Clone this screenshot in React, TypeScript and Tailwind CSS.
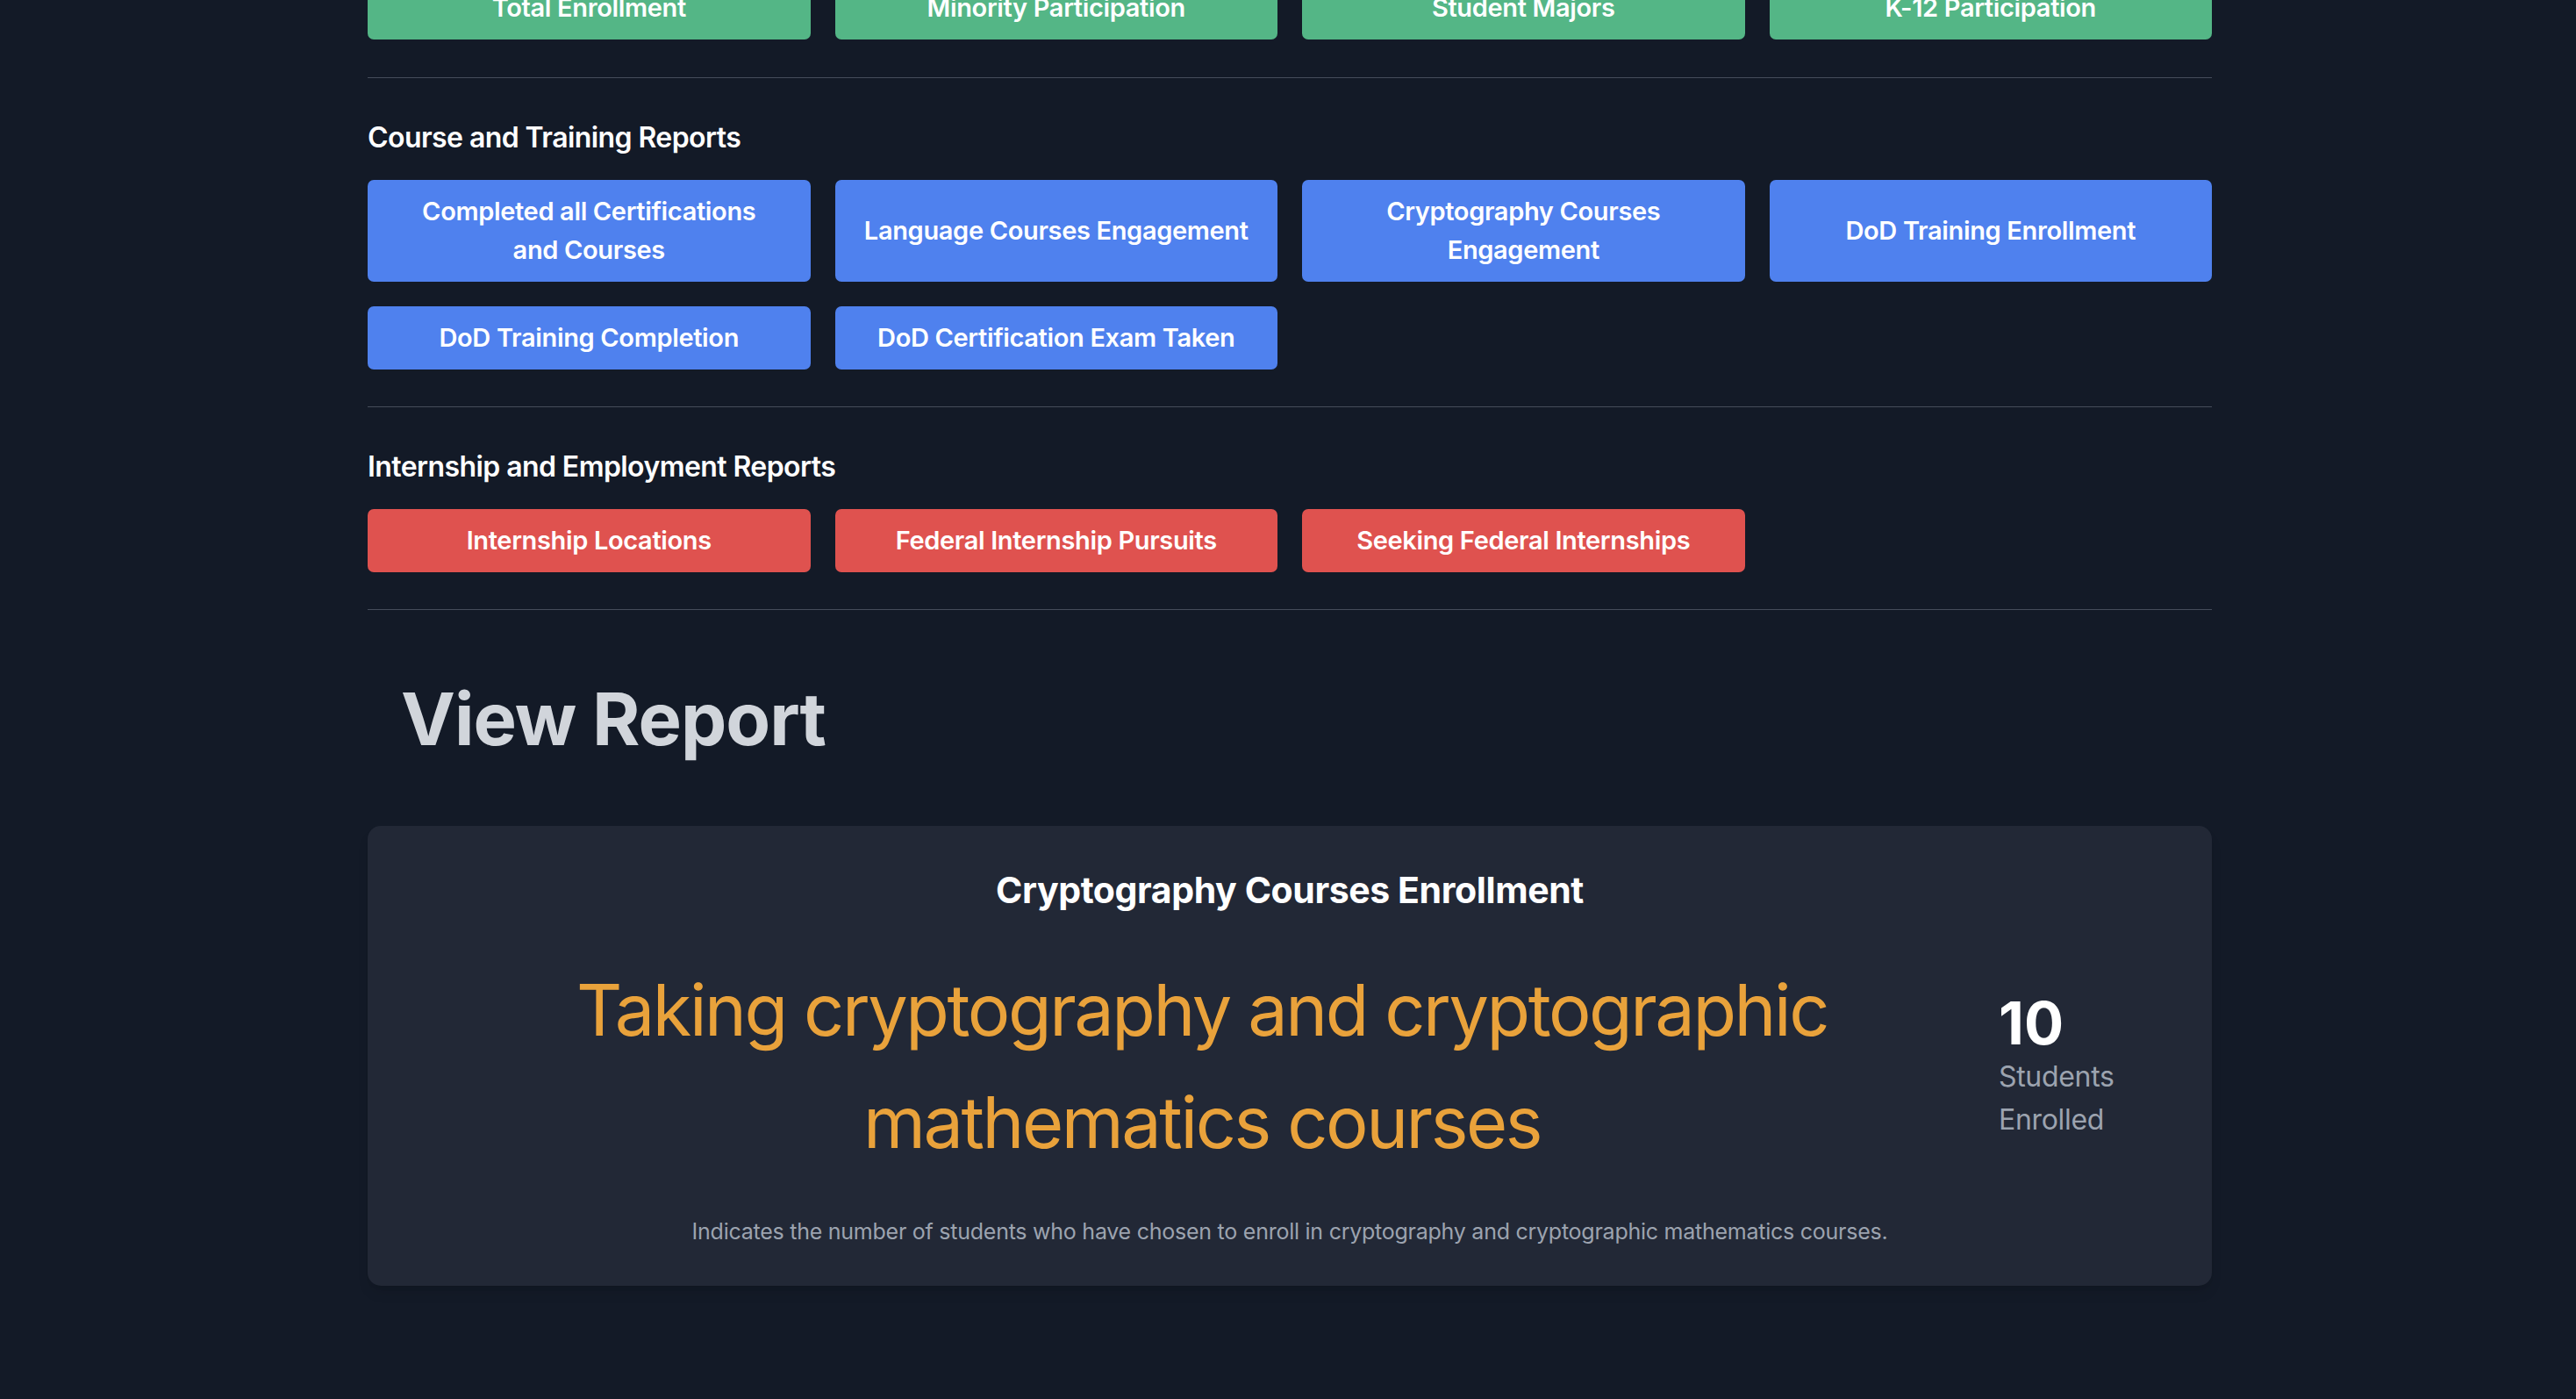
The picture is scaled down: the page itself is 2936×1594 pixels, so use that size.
import React from 'react';

type Section = {
  title?: string;
  color: string;
  items: React.ReactNode[];
};

const sections: Section[] = [
  {
    color: 'bg-[#54b686]',
    items: ['Total Enrollment', 'Minority Participation', 'Student Majors', 'K-12 Participation'],
  },
  {
    title: 'Course and Training Reports',
    color: 'bg-[#4f81ee]',
    items: [
      <>Completed all Certifications<br />and Courses</>,
      'Language Courses Engagement',
      <>Cryptography Courses<br />Engagement</>,
      'DoD Training Enrollment',
      'DoD Training Completion',
      'DoD Certification Exam Taken',
    ],
  },
  {
    title: 'Internship and Employment Reports',
    color: 'bg-[#df524f]',
    items: ['Internship Locations', 'Federal Internship Pursuits', 'Seeking Federal Internships'],
  },
];

function ReportButton({ label, color }: { label: React.ReactNode; color: string }) {
  return (
    <button
      className={`${color} flex items-center justify-center rounded-[7px] px-[30px] py-[14px] text-center text-[29px] font-semibold leading-[44px] tracking-[-0.012em] text-white whitespace-nowrap`}
    >
      <span>{label}</span>
    </button>
  );
}

export default function App() {
  const report = {
    title: 'Cryptography Courses Enrollment',
    headline: 'Taking cryptography and cryptographic mathematics courses',
    count: 10,
    unit: 'Students Enrolled',
    description:
      'Indicates the number of students who have chosen to enroll in cryptography and cryptographic mathematics courses.',
  };

  return (
    <div className="min-h-[1594px] overflow-hidden bg-[#131a27] pl-[4px] font-['Inter','Liberation_Sans',sans-serif]">
      <div className="mx-auto w-[2102px]">
        {sections.map((section, i) => (
          <div
            key={i}
            className={`border-b border-[#454c5a] ${i === 0 ? 'pb-[43px]' : 'pt-[42px] pb-[42px]'}`}
          >
            {section.title && (
              <h3 className="mb-[22px] text-[32px] font-semibold leading-[52px] tracking-[-0.018em] text-white">
                {section.title}
              </h3>
            )}
            <div className={`grid grid-cols-4 gap-[28px] ${i === 0 ? 'mt-[-27px]' : ''}`}>
              {section.items.map((item, j) => (
                <ReportButton key={j} label={item} color={section.color} />
              ))}
            </div>
          </div>
        ))}

        <h2 className="px-[38px] pt-[83px] pb-[80px] text-[83px] font-bold leading-[83px] tracking-[-0.012em] text-[#d1d5db]">
          View Report
        </h2>

        <div className="rounded-[15px] bg-[#222836] px-[45px] pt-[47px] pb-[43px] shadow-lg">
          <h4 className="mb-[47px] text-center text-[41px] font-bold leading-[52px] tracking-[-0.01em] text-white">
            {report.title}
          </h4>
          <div className="flex items-center">
            <p className="flex-1 px-[20px] text-center text-[81px] leading-[128px] tracking-[-0.03em] text-[#e9a23b]">
              {report.headline}
            </p>
            <div className="w-[200px] pl-[2px]">
              <div className="text-[67px] font-bold leading-[72px] text-white">{report.count}</div>
              <div className="text-[32px] leading-[49px] tracking-[-0.01em] text-[#9ca3af]">{report.unit}</div>
            </div>
          </div>
          <p className="mt-[42px] text-center text-[25px] leading-[37px] tracking-[-0.01em] text-[#9ca3af]">
            {report.description}
          </p>
        </div>
      </div>
    </div>
  );
}
